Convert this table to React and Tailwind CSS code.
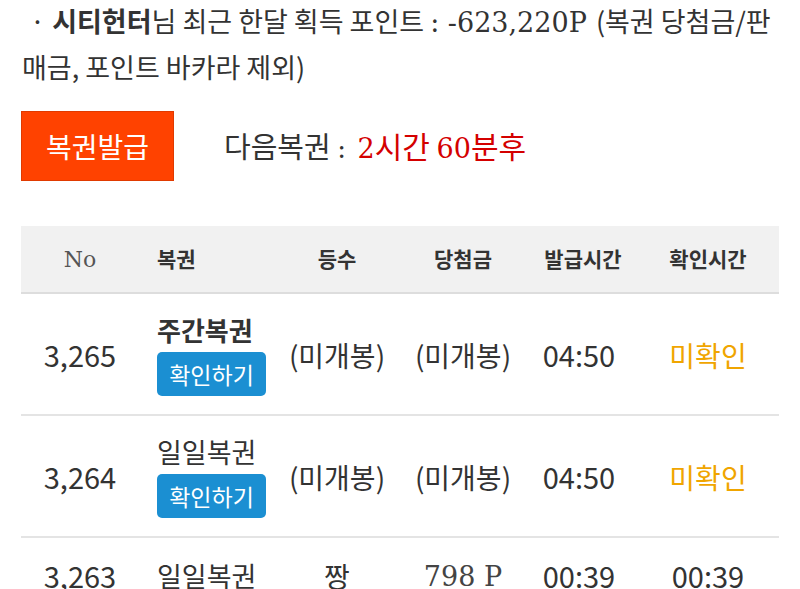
const sans = { fontFamily: '"Noto Sans CJK KR", "Noto Sans", sans-serif' };

const rows = [
  { no: '3,265', name: '주간복권', bold: true, check: true, rank: '(미개봉)', prize: '(미개봉)', issued: '04:50', confirmed: null },
  { no: '3,264', name: '일일복권', bold: false, check: true, rank: '(미개봉)', prize: '(미개봉)', issued: '04:50', confirmed: null },
  { no: '3,263', name: '일일복권', bold: false, check: false, rank: '짱', prize: '798 P', issued: '00:39', confirmed: '00:39' },
];

const cols = 'grid grid-cols-[118px_138px_120px_132px_108px_142px]';
const serif = "font-['DejaVu_Serif',serif]";

function App() {
  return (
    <div className="w-[800px] h-[589px] overflow-hidden bg-white text-[#333]" style={sans}>
      {/* point summary */}
      <p className="px-[22px] -mt-[1px] text-[27px] leading-[44px] whitespace-nowrap">
        <span className="ml-[8px] mr-[7px]">·</span>
        <b className="font-bold">시티헌터</b>님 최근 한달 획득 포인트{' '}
        <span className={`${serif} text-[27px]`}>: -623,220P</span>{' '}
        <span className="ml-[3px]">(복권 당첨금/판</span>
        <br />
        매금, 포인트 바카라 제외)
      </p>

      {/* issue button */}
      <div className="flex items-center mt-[22px] px-[21px]">
        <button className="w-[153px] h-[70px] bg-[#ff4200] border border-[#e03a00] text-white text-[28px]">
          복권발급
        </button>
        <div className="ml-[50px] text-[29px]">
          다음복권 <span className={`${serif} text-[26px]`}>:</span>{' '}
          <span className="ml-[5px] text-[#d40000]">
            <span className={`${serif} text-[27px]`}>2</span>
            <span className="text-[30px]">시간 </span>
            <span className={`${serif} text-[27px]`}>60</span>
            <span className="text-[30px]">분후</span>
          </span>
        </div>
      </div>

      {/* table */}
      <div className="mx-[21px] mt-[45px] w-[758px]">
        <div className={`${cols} h-[68px] items-center bg-[#f1f1f1] border-b-2 border-[#dddddd] text-[21px] font-bold`}>
          <div className={`text-center font-normal text-[#555] ${serif} text-[22px]`}>No</div>
          <div className="pl-[18px]">복권</div>
          <div className="text-center">등수</div>
          <div className="text-center">당첨금</div>
          <div className="text-center">발급시간</div>
          <div className="text-center">확인시간</div>
        </div>
        {rows.map((r) => (
          <div
            key={r.no}
            className={`${cols} ${r.check ? 'pt-[19px] pb-[18px]' : 'pt-[16px] pb-[18px]'} items-center border-b-2 border-[#e4e4e4] text-[28px]`}
          >
            <div className="text-center text-[29px]">{r.no}</div>
            <div className="pl-[18px] flex flex-col items-start">
              <span className={r.bold ? 'font-bold text-[26px] leading-[34px]' : 'text-[27px] leading-[34px]'}>{r.name}</span>
              {r.check && (
                <span className="mt-[5px] w-[109px] h-[44px] rounded-[5px] bg-[#1b8fd2] text-white text-[23px] flex items-center justify-center">
                  확인하기
                </span>
              )}
            </div>
            <div className="text-center">{r.rank}</div>
            <div className={r.prize.includes('P') ? `text-center ${serif} text-[27px] text-[#444] pt-[3px]` : 'text-center'}>{r.prize}</div>
            <div className="text-center text-[29px] pr-[8px]">{r.issued}</div>
            <div className={r.confirmed ? 'text-center text-[29px]' : 'text-center text-[#f0a500]'}>{r.confirmed || '미확인'}</div>
          </div>
        ))}
      </div>
    </div>
  );
}

export default App;
